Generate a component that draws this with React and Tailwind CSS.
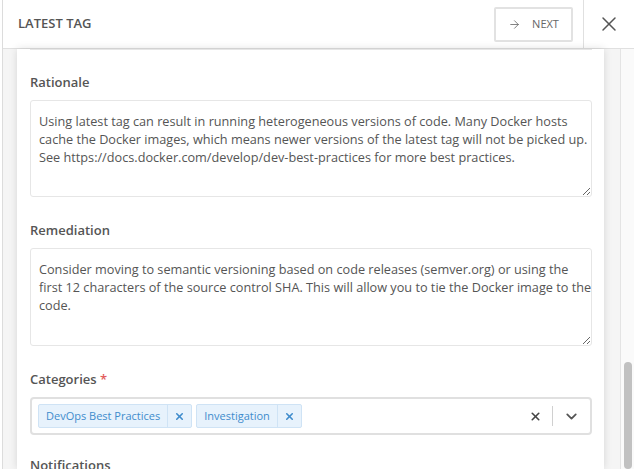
import React from 'react';
import { ArrowRight, X, ChevronDown } from 'lucide-react';

const rationale =
    'Using latest tag can result in running heterogeneous versions of code. Many Docker hosts\ncache the Docker images, which means newer versions of the latest tag will not be picked up.\nSee https://docs.docker.com/develop/dev-best-practices for more best practices.';

const remediation =
    'Consider moving to semantic versioning based on code releases (semver.org) or using the\nfirst 12 characters of the source control SHA. This will allow you to tie the Docker image to the\ncode.';

function Field({ label, required, children, className = '' }) {
    return (
        <div className={className}>
            <div className="text-[13px] leading-[18px] font-semibold text-[#555]">
                {label}
                {required && <span className="text-[#e25c5c]"> *</span>}
            </div>
            <div className="mt-[9px]">{children}</div>
        </div>
    );
}

function TextBox({ value, height }) {
    return (
        <textarea
            readOnly
            value={value}
            className={`block w-full ${height} border border-[#e6e6e6] rounded-[3px] bg-white pl-2 pr-0 pt-[11px] text-[12.7px] leading-[18px] text-[#555] whitespace-pre overflow-hidden resize-y outline-none`}
        />
    );
}

function Tag({ label }) {
    return (
        <div className="flex h-[24px] items-stretch border border-[#cfe3f5] bg-[#e7f2fc] rounded-[2px]">
            <span className="flex items-center px-[7px] text-[11px] text-[#3f8ccc]">{label}</span>
            <span className="flex w-[24px] items-center justify-center border-l border-[#cfe3f5] text-[#3f8ccc]">
                <X size={11} strokeWidth={3.5} />
            </span>
        </div>
    );
}

export default function App() {
    return (
        <div className="w-[634px] h-[469px] overflow-hidden bg-white pl-[2px]" style={{ fontFamily: '"Open Sans", "Liberation Sans", sans-serif' }}>
            <div className="flex h-full flex-col border-l border-[#dcdcdc]">
                {/* header */}
                <div className="flex h-[49px] shrink-0 items-center border-b border-[#e0e0e0]">
                    <div className="flex-1 pl-[15px] text-[13px] font-semibold text-[#555]">LATEST TAG</div>
                    <button className="mr-[10px] flex h-[35px] w-[79px] items-center justify-center gap-[11px] rounded-[2px] border-2 border-[#e2e2e2] text-[11px] text-[#666]">
                        <ArrowRight size={13} strokeWidth={1.5} /> NEXT
                    </button>
                    <div className="flex h-full w-[51px] items-center justify-center border-l border-[#e0e0e0] text-[#555]">
                        <X size={24} strokeWidth={1.5} />
                    </div>
                </div>

                {/* body */}
                <div className="flex min-h-0 flex-1">
                    <div className="flex-1 bg-[#f5f5f5] pl-[14px] pr-[16px]">
                        <div className="h-full bg-white pl-[13px] pr-[12px] shadow-[0_0_8px_rgba(0,0,0,0.13)]">
                            <div className="h-[1px] bg-[#e6e6e6]" />

                            <Field label="Rationale" className="mt-[23px]">
                                <TextBox value={rationale} height="h-[97px]" />
                            </Field>

                            <Field label="Remediation" className="mt-[24px]">
                                <TextBox value={remediation} height="h-[98px]" />
                            </Field>

                            <Field label="Categories" required className="mt-[24px]">
                                <div className="flex h-[38px] items-center gap-[4px] rounded-[4px] border-2 border-[#e0e0e0] pl-[6px]">
                                    <Tag label="DevOps Best Practices" />
                                    <Tag label="Investigation" />
                                    <div className="ml-auto flex items-center">
                                        <span className="flex w-[34px] justify-center text-[#444]">
                                            <X size={13} strokeWidth={3} />
                                        </span>
                                        <span className="h-[20px] w-px bg-[#d0d0d0]" />
                                        <span className="flex w-[37px] justify-center text-[#555]">
                                            <ChevronDown size={17} strokeWidth={2.5} />
                                        </span>
                                    </div>
                                </div>
                            </Field>

                            <div className="mt-[21px] text-[13px] leading-[18px] font-semibold text-[#555]">Notifications</div>
                        </div>
                    </div>

                    {/* scrollbar */}
                    <div className="w-[14px] shrink-0 border-l border-[#e4e4e4] bg-[#fafafa] pl-[3px] pt-[313px]">
                        <div className="h-full w-[8px] rounded-full bg-[#c1c1c1]" />
                    </div>
                </div>
            </div>
        </div>
    );
}
